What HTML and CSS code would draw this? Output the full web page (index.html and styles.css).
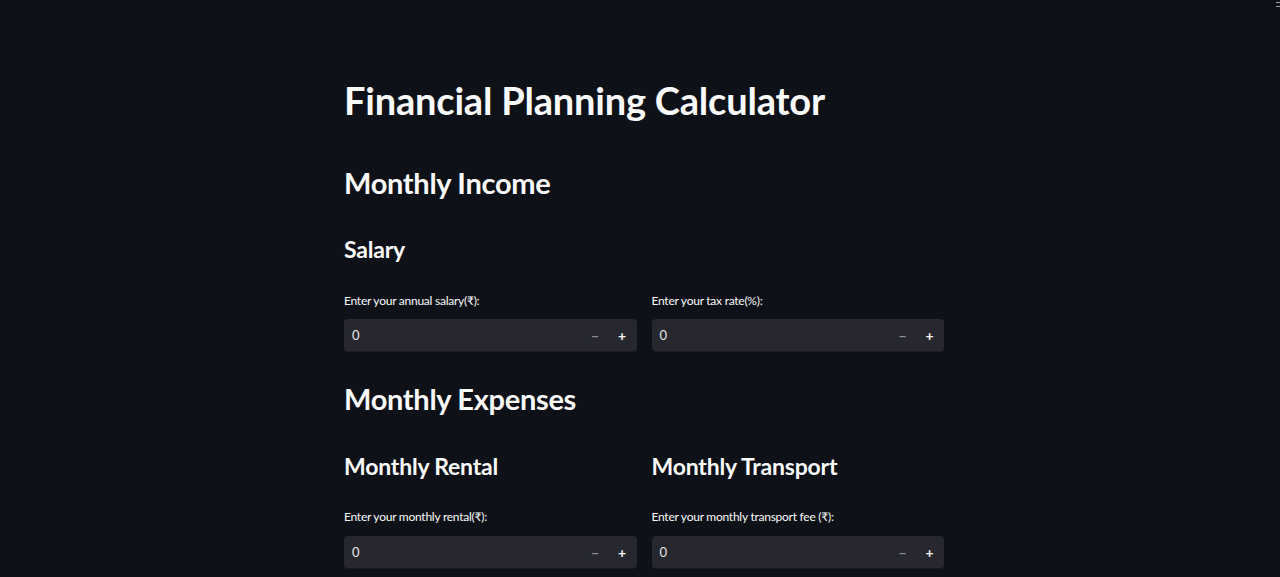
FILE: index.html
```html
<!DOCTYPE html>
<html lang="en">
<head>
<meta charset="utf-8">
<title>Financial Planning Calculator</title>
<link rel="stylesheet" href="styles.css">
</head>
<body>
<div class="corner-menu"><span></span><span></span></div>
<main class="main">
  <h1 class="title">Financial Planning Calculator</h1>
  <h2 class="section first">Monthly Income</h2>
  <h3 class="sub">Salary</h3>
  <div class="cols">
    <div class="field">
      <label class="label">Enter your annual salary(₹):</label>
      <div class="num-input">
        <span class="value">0</span>
        <span class="step minus">−</span>
        <span class="step plus">+</span>
      </div>
    </div>
    <div class="field">
      <label class="label">Enter your tax rate(%):</label>
      <div class="num-input">
        <span class="value">0</span>
        <span class="step minus">−</span>
        <span class="step plus">+</span>
      </div>
    </div>
  </div>
  <h2 class="section second">Monthly Expenses</h2>
  <div class="cols">
    <div class="field">
      <h3 class="sub">Monthly Rental</h3>
      <label class="label">Enter your monthly rental(₹):</label>
      <div class="num-input">
        <span class="value">0</span>
        <span class="step minus">−</span>
        <span class="step plus">+</span>
      </div>
    </div>
    <div class="field">
      <h3 class="sub">Monthly Transport</h3>
      <label class="label">Enter your monthly transport fee (₹):</label>
      <div class="num-input">
        <span class="value">0</span>
        <span class="step minus">−</span>
        <span class="step plus">+</span>
      </div>
    </div>
  </div>
</main>
</body>
</html>
```

FILE: styles.css
```css
html, body {
  margin: 0;
  padding: 0;
  background: #0e1117;
  color: #fafafa;
  font-family: "Lato", "Noto Sans", sans-serif;
  height: 100%;
  overflow: hidden;
}

.corner-menu {
  position: absolute;
  top: 2px;
  right: 0;
  width: 4px;
  display: flex;
  flex-direction: column;
  gap: 3px;
}
.corner-menu span {
  display: block;
  height: 1px;
  background: #9aa0a8;
}

.main {
  width: 600px;
  margin-left: 344px;
  padding-top: 78px;
}

.title {
  margin: 0;
  font-size: 38px;
  font-weight: 700;
  line-height: 44px;
  letter-spacing: -0.2px;
}

.section {
  margin: 0;
  font-size: 29px;
  font-weight: 700;
  line-height: 38px;
  letter-spacing: -0.3px;
}

.section.first {
  margin-top: 42px;
}

.section.second {
  margin-top: 28px;
}

.sub {
  margin: 0;
  font-size: 23px;
  font-weight: 700;
  line-height: 30px;
  letter-spacing: -0.2px;
}

.section + .sub {
  margin-top: 32px;
}

.cols {
  display: grid;
  grid-template-columns: 1fr 1fr;
  column-gap: 15px;
}

.section + .cols {
  margin-top: 33px;
}

.sub + .cols {
  margin-top: 29px;
}

.field {
  display: flex;
  flex-direction: column;
}

.field .sub + .label {
  margin-top: 28px;
}

.label {
  font-size: 12px;
  line-height: 16px;
  color: #fafafa;
  letter-spacing: -0.25px;
}

.num-input {
  margin-top: 10px;
  height: 33px;
  background: #26272f;
  border-radius: 4px;
  border-bottom: 1px solid #1b1c22;
  box-sizing: border-box;
  display: flex;
  align-items: center;
  padding-left: 8px;
  font-size: 13px;
}

.field .sub + .label + .num-input {
  margin-top: 11px;
}

.value {
  flex: 1;
  color: #e6e6e8;
}

.step {
  width: 27px;
  text-align: center;
  font-weight: 700;
  font-size: 14px;
}

.minus {
  color: #8a8c94;
}

.plus {
  color: #fafafa;
  margin-right: 1px;
}
```
